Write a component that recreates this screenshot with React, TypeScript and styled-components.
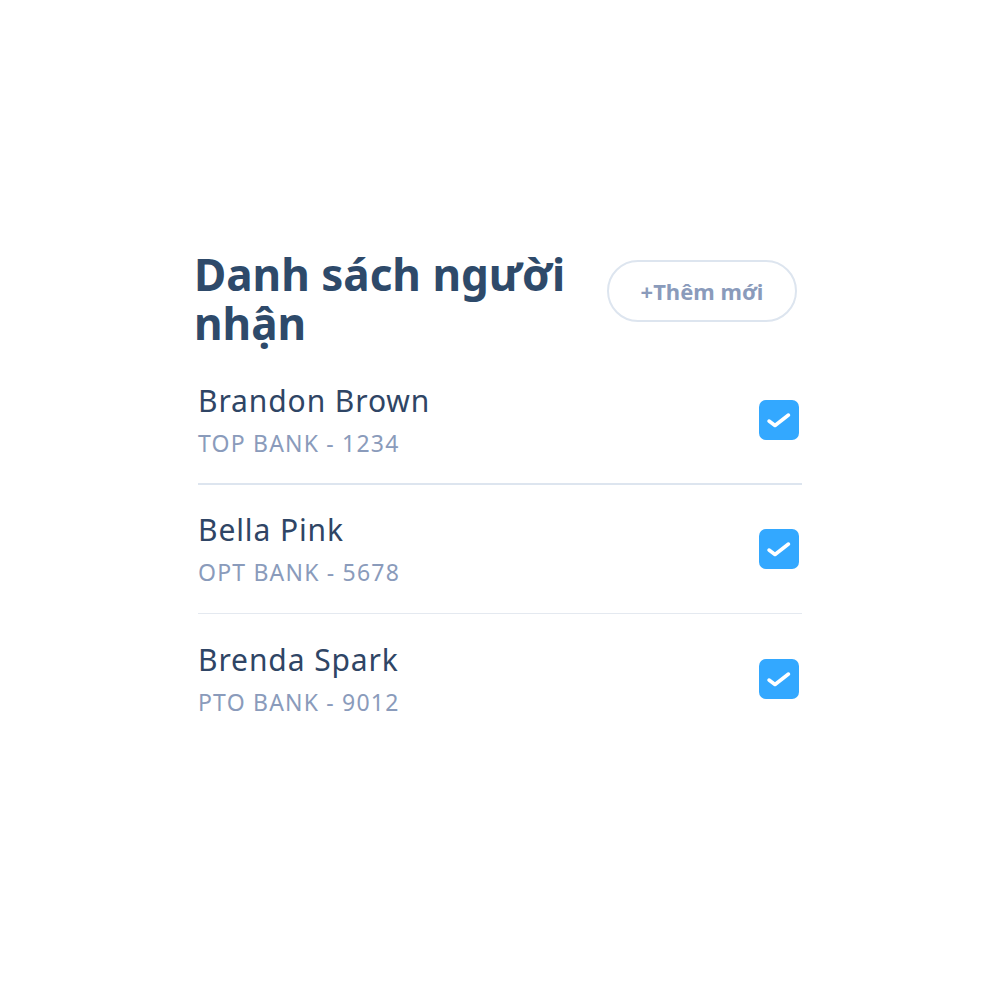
import React from "react";
import styled, { createGlobalStyle } from "styled-components";

const Global = createGlobalStyle`
  html, body { margin: 0; padding: 0; background: #ffffff; }
  body { font-family: "Noto Sans", "Open Sans", sans-serif; }
`;

const Page = styled.div`
  width: 1001px;
  height: 1001px;
  box-sizing: border-box;
  padding: 250px 0 0 194px;
`;

const Panel = styled.section`
  width: 608px;
  display: flex;
  flex-direction: column;
`;

const Header = styled.header`
  display: flex;
  justify-content: space-between;
  align-items: flex-start;
  padding-right: 5px;
`;

const Title = styled.h1`
  margin: 0;
  width: 400px;
  font-size: 44px;
  line-height: 49px;
  font-weight: 700;
  color: #2e4a6a;
`;

const AddButton = styled.button`
  margin-top: 10px;
  height: 62px;
  width: 190px;
  border: 2px solid #dde5ef;
  border-radius: 31px;
  background: #ffffff;
  font-family: inherit;
  font-size: 22px;
  font-weight: 700;
  color: #8a9bbb;
`;

const List = styled.ul`
  list-style: none;
  margin: 8px 0 0;
  padding: 0 0 0 4px;
`;

const Row = styled.li<{ $divider: "strong" | "light" | "none" }>`
  display: flex;
  align-items: center;
  justify-content: space-between;
  height: 129px;
  border-bottom: ${(p) =>
    p.$divider === "strong"
      ? "2px solid #dde5ef"
      : p.$divider === "light"
      ? "1px solid #e4e9f0"
      : "none"};
  box-sizing: border-box;
`;

const Info = styled.div`
  display: flex;
  flex-direction: column;
  gap: 8px;
`;

const Name = styled.div`
  font-size: 30px;
  line-height: 38px;
  letter-spacing: 0.9px;
  color: #2f4565;
`;

const Account = styled.div`
  font-size: 23px;
  line-height: 30px;
  letter-spacing: 1.2px;
  color: #8a9bbb;
`;

const Check = styled.span`
  width: 40px;
  height: 40px;
  border-radius: 7px;
  background: #33a8ff;
  display: flex;
  align-items: center;
  justify-content: center;
  margin-right: 3px;
`;

const people = [
  { name: "Brandon Brown", account: "TOP BANK - 1234", divider: "strong" as const },
  { name: "Bella Pink", account: "OPT BANK - 5678", divider: "light" as const },
  { name: "Brenda Spark", account: "PTO BANK - 9012", divider: "none" as const },
];

export default function App() {
  return (
    <Page>
      <Global />
      <Panel>
        <Header>
          <Title>Danh sách người nhận</Title>
          <AddButton>+Thêm mới</AddButton>
        </Header>
        <List>
          {people.map((p) => (
            <Row key={p.name} $divider={p.divider}>
              <Info>
                <Name>{p.name}</Name>
                <Account>{p.account}</Account>
              </Info>
              <Check>
                <svg width="26" height="18" viewBox="0 0 26 18" fill="none">
                  <path
                    d="M3 10 L9 14.5 L22.5 4"
                    stroke="#ffffff"
                    strokeWidth="3.5"
                    strokeLinecap="round"
                    strokeLinejoin="round"
                  />
                </svg>
              </Check>
            </Row>
          ))}
        </List>
      </Panel>
    </Page>
  );
}
